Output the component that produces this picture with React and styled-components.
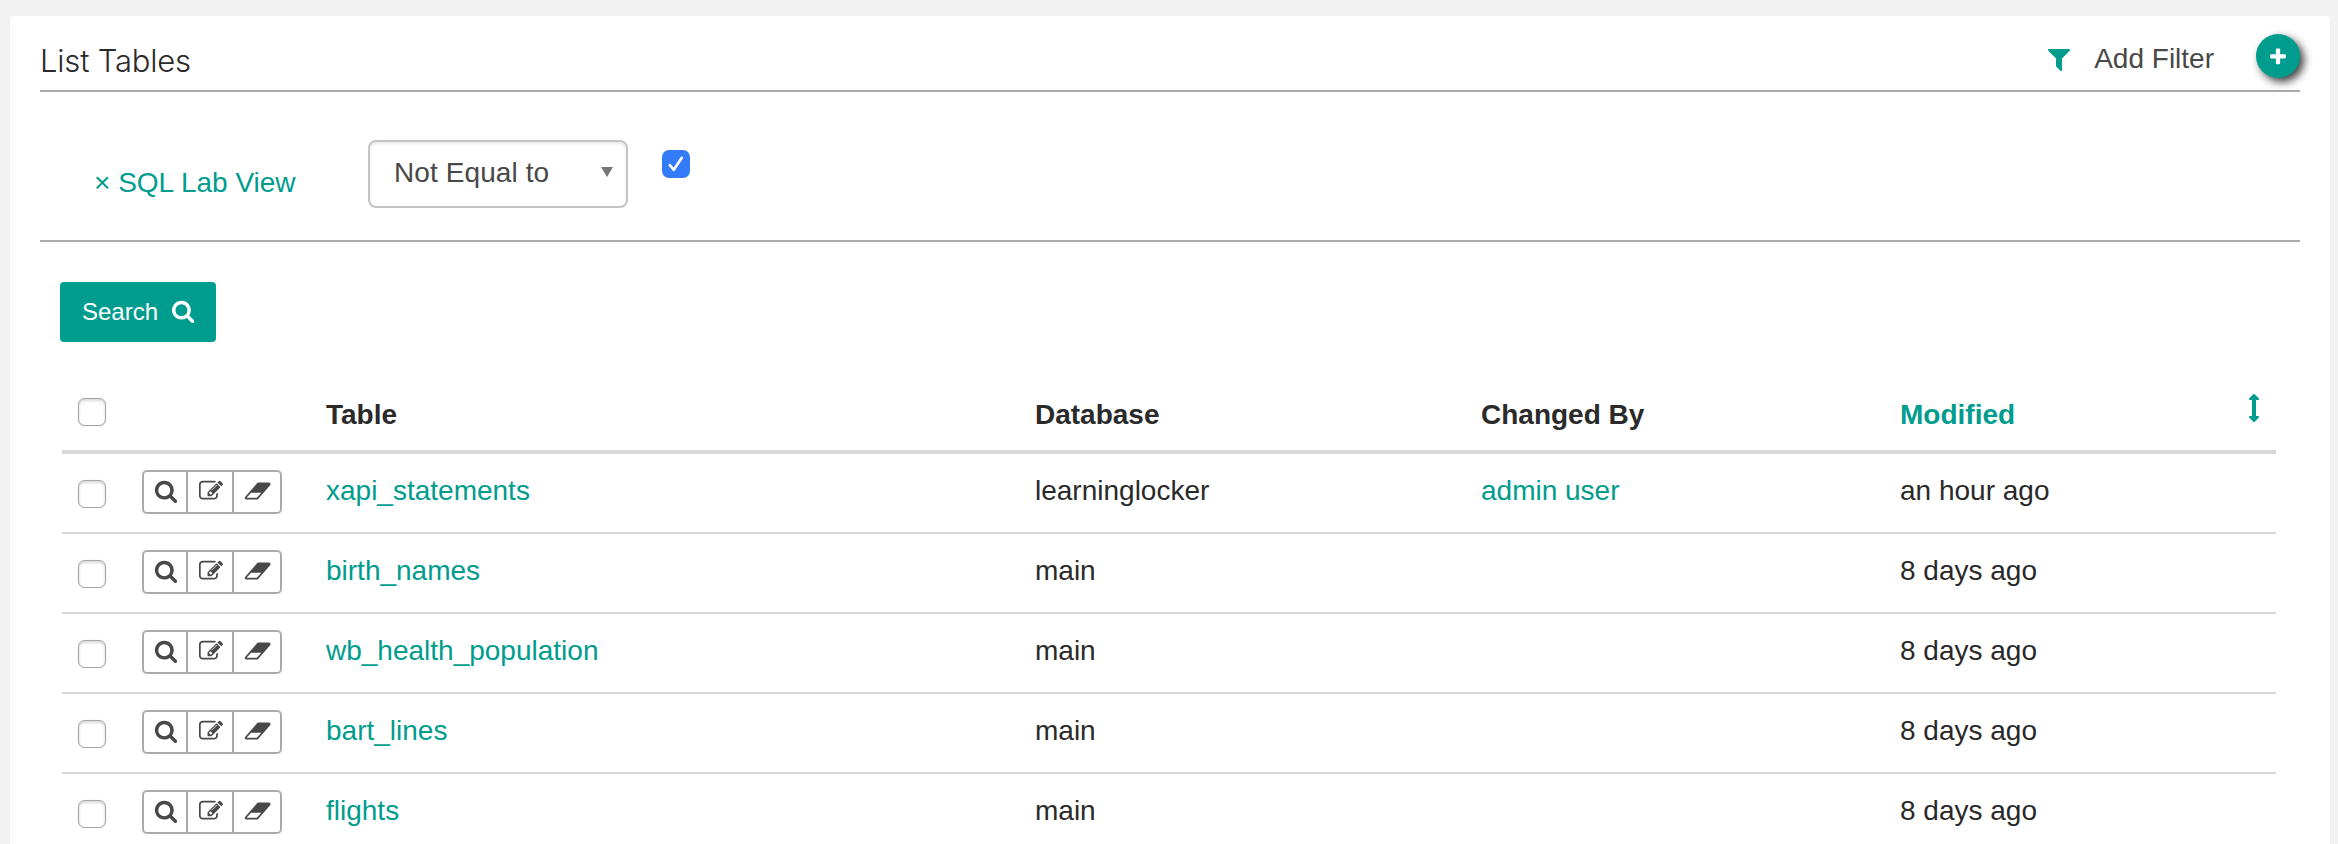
import React from "react";
import styled, { createGlobalStyle, css } from "styled-components";

const teal = "#009c8e";

const GlobalStyle = createGlobalStyle`
  *, *::before, *::after { box-sizing: border-box; }
  body {
    margin: 0;
    background: #f2f2f2;
    color: #2a2a2a;
    font-family: "Liberation Sans", Arial, sans-serif;
    font-size: 28px;
    line-height: 40px;
    overflow: hidden;
  }
`;

const Page = styled.div`
  height: 844px;
  padding: 16px 8px 0 10px;
  overflow: hidden;
`;

const Panel = styled.main`
  height: 900px;
  padding: 0 30px;
  background: #fff;
  border-radius: 4px;
  box-shadow: 0 2px 2px rgba(0, 0, 0, 0.05);
`;

const Header = styled.header`
  display: flex;
  align-items: flex-start;
  height: 76px;
  border-bottom: 2px solid #aaa;
`;

const Title = styled.h1`
  margin: 25px auto 0 0;
  font-family: Inter, "Liberation Sans", sans-serif;
  font-size: 31px;
  font-weight: 300;
  line-height: 40px;
  letter-spacing: -0.2px;
`;

const AddFilter = styled.button`
  display: flex;
  align-items: center;
  gap: 24px;
  margin: 23px 42px 0 0;
  padding: 0;
  border: 0;
  background: none;
  color: #484848;
  font: inherit;
  line-height: 40px;
`;

const AddButton = styled.button`
  display: flex;
  align-items: center;
  justify-content: center;
  width: 44px;
  height: 44px;
  margin-top: 18px;
  padding: 2px 0 0;
  border: 0;
  border-radius: 50%;
  background: ${teal};
  color: #fff;
  box-shadow: 4px 4px 8px rgba(0, 0, 0, 0.75);
`;

const Icon = styled.svg`
  display: block;
  flex: none;
  height: ${(p) => p.$size}px;
  fill: ${(p) => p.$color || "currentColor"};
`;

const FilterRow = styled.section`
  display: flex;
  align-items: flex-start;
  height: 150px;
  padding: 48px 0 0 54px;
  border-bottom: 2px solid #aaa;
`;

const FilterName = styled.a`
  width: 274px;
  margin-top: 23px;
  color: ${teal};
`;

const Select = styled.div`
  display: flex;
  align-items: center;
  justify-content: space-between;
  width: 260px;
  height: 68px;
  padding: 0 13px 2px 24px;
  border: 2px solid #c4c4c4;
  border-radius: 8px;
  box-shadow: inset 0 2px 3px rgba(0, 0, 0, 0.09);
  color: #484848;
  letter-spacing: 0.1px;
`;

const Caret = styled.i`
  border: solid transparent;
  border-width: 10px 6px 0;
  border-top-color: #777;
  margin-bottom: 2px;
`;

const Checkbox = styled.span`
  display: flex;
  align-items: center;
  justify-content: center;
  width: 28px;
  height: 28px;
  border-radius: 7px;
  ${(p) =>
    p.$checked
      ? css`
          background: #347bfa;
        `
      : css`
          border: 1px solid #a6a6a6;
          background: #fff;
          box-shadow: inset 0 2px 3px rgba(0, 0, 0, 0.15), 0 0 1px rgba(0, 0, 0, 0.25);
        `}
`;

const FilterValue = styled.div`
  margin: 10px 0 0 34px;
`;

const SearchButton = styled.button`
  display: flex;
  align-items: center;
  gap: 14px;
  width: 156px;
  height: 60px;
  margin: 40px 0 0 20px;
  padding: 0 0 0 22px;
  border: 0;
  border-radius: 4px;
  background: ${teal};
  color: #fff;
  font: inherit;
  font-size: 24px;
  svg { margin-bottom: 2px; }
`;

const Table = styled.div`
  margin: 28px 24px 0 22px;
`;

const Row = styled.div`
  display: grid;
  grid-template-columns: 80px 184px 709px 446px 419px 1fr;
  align-items: start;
  height: 80px;
  border-bottom: 2px solid #d8d8d8;
`;

const HeadRow = styled(Row)`
  height: 84px;
  border-bottom-width: 4px;
  font-weight: 700;
`;

const CheckCell = styled.div`
  padding: ${(p) => (p.$head ? 28 : 26)}px 0 0 16px;
`;

const ActionCell = styled.div`
  display: flex;
  padding-top: 16px;
`;

const ActionButton = styled.button`
  display: flex;
  align-items: center;
  justify-content: center;
  width: ${(p) => p.$width}px;
  height: 44px;
  padding: 0 0 2px 2px;
  border: 2px solid #aaa;
  background: #fff;
  color: #484848;
  & + & { margin-left: -2px; }
  &:first-child { border-radius: 5px 0 0 5px; }
  &:last-child { border-radius: 0 5px 5px 0; }
`;

const Cell = styled.div`
  padding-top: ${(p) => (p.$head ? 25 : 17)}px;
  color: ${(p) => (p.$link ? teal : "inherit")};
`;

const SortCell = styled(Cell)`
  display: flex;
  justify-content: space-between;
  padding-right: 8px;
  svg { margin-top: -1px; }
`;

const paths = {
  search:
    "M1216 832q0-185-131.5-316.5t-316.5-131.5-316.5 131.5-131.5 316.5 131.5 316.5 316.5 131.5 316.5-131.5 131.5-316.5zm512 832q0 52-38 90t-90 38q-54 0-90-38l-343-342q-179 124-399 124-143 0-273.5-55.5t-225-150-150-225-55.5-273.5 55.5-273.5 150-225 225-150 273.5-55.5 273.5 55.5 225 150 150 225 55.5 273.5q0 220-124 399l343 343q37 37 37 90z",
  edit:
    "M888 1184l116-116-152-152-116 116v56h96v96h56zm440-720q-16-16-33 1l-350 350q-17 17-1 33t33-1l350-350q17-17 1-33zm80 594v190q0 119-84.5 203.5t-203.5 84.5h-832q-119 0-203.5-84.5t-84.5-203.5v-832q0-119 84.5-203.5t203.5-84.5h832q63 0 117 25 15 7 18 23 3 17-9 29l-49 49q-14 14-32 8-23-6-45-6h-832q-66 0-113 47t-47 113v832q0 66 47 113t113 47h832q66 0 113-47t47-113v-126q0-13 9-22l64-64q15-15 35-7t20 29zm-96-738l288 288-672 672h-288v-288zm444 132l-92 92-288-288 92-92q28-28 68-28t68 28l152 152q28 28 28 68t-28 68z",
  eraser:
    "M960 1408l336-384h-768l-336 384h768zm1013-1077q15 34 9.5 71.5t-30.5 65.5l-896 1024q-38 44-96 44h-768q-38 0-69.5-20.5t-47.5-54.5q-15-34-9.5-71.5t30.5-65.5l896-1024q38-44 96-44h768q38 0 69.5 20.5t47.5 54.5z",
  filter:
    "M1595 295q17 41-14 70l-493 493v742q0 42-39 59-13 5-25 5-27 0-45-19l-256-256q-19-19-19-45v-486l-493-493q-31-29-14-70 17-39 59-39h1280q42 0 59 39z",
  plus:
    "M1600 736v192q0 40-28 68t-68 28h-416v416q0 40-28 68t-68 28h-192q-40 0-68-28t-28-68v-416h-416q-40 0-68-28t-28-68v-192q0-40 28-68t68-28h416v-416q0-40 28-68t68-28h192q40 0 68 28t28 68v416h416q40 0 68 28t28 68z",
  sort:
    "M1216 320q0 26-19 45t-45 19h-128v1024h128q26 0 45 19t19 45-19 45l-256 256q-19 19-45 19t-45-19l-256-256q-19-19-19-45t19-45 45-19h128v-1024h-128q-26 0-45-19t-19-45 19-45l256-256q19-19 45-19t45 19l256 256q19 19 19 45z",
};

const Glyph = ({ name, size, box = "0 0 1792 1792", color }) => (
  <Icon viewBox={box} $size={size} $color={color}>
    <path d={paths[name]} />
  </Icon>
);

const rows = [
  { table: "xapi_statements", database: "learninglocker", by: "admin user", modified: "an hour ago" },
  { table: "birth_names", database: "main", by: "", modified: "8 days ago" },
  { table: "wb_health_population", database: "main", by: "", modified: "8 days ago" },
  { table: "bart_lines", database: "main", by: "", modified: "8 days ago" },
  { table: "flights", database: "main", by: "", modified: "8 days ago" },
];

export default function App() {
  return (
    <Page>
      <GlobalStyle />
      <Panel>
        <Header>
          <Title>List Tables</Title>
          <AddFilter>
            <Glyph name="filter" size={28} box="192 0 1408 1792" color={teal} />
            Add Filter
          </AddFilter>
          <AddButton aria-label="Add">
            <Glyph name="plus" size={20} />
          </AddButton>
        </Header>
        <FilterRow>
          <FilterName>× SQL Lab View</FilterName>
          <Select>
            Not Equal to
            <Caret />
          </Select>
          <FilterValue>
            <Checkbox $checked>
              <svg width="20" height="20" viewBox="0 0 20 20" fill="none" stroke="#fff" strokeWidth="2.6" strokeLinecap="round" strokeLinejoin="round">
                <path d="M3.8 11.2L7.8 15.8L15.8 3.8" />
              </svg>
            </Checkbox>
          </FilterValue>
        </FilterRow>
        <SearchButton>
          Search
          <Glyph name="search" size={24} box="64 0 1664 1792" />
        </SearchButton>
        <Table>
          <HeadRow>
            <CheckCell $head>
              <Checkbox />
            </CheckCell>
            <span />
            <Cell $head>Table</Cell>
            <Cell $head>Database</Cell>
            <Cell $head>Changed By</Cell>
            <SortCell $head $link>
              Modified
              <Glyph name="sort" size={28} />
            </SortCell>
          </HeadRow>
          {rows.map((r) => (
            <Row key={r.table}>
              <CheckCell>
                <Checkbox />
              </CheckCell>
              <ActionCell>
                <ActionButton $width={46} aria-label="Show">
                  <Glyph name="search" size={24} />
                </ActionButton>
                <ActionButton $width={48} aria-label="Edit">
                  <Glyph name="edit" size={24} />
                </ActionButton>
                <ActionButton $width={50} aria-label="Delete">
                  <Glyph name="eraser" size={24} box="0 0 2048 1792" />
                </ActionButton>
              </ActionCell>
              <Cell $link>{r.table}</Cell>
              <Cell>{r.database}</Cell>
              <Cell $link>{r.by}</Cell>
              <Cell>{r.modified}</Cell>
            </Row>
          ))}
        </Table>
      </Panel>
    </Page>
  );
}
